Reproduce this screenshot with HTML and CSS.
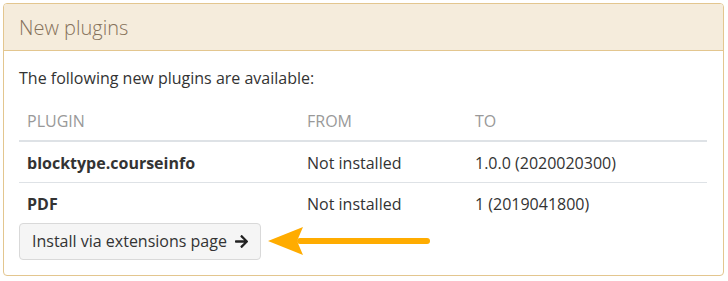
FILE: index.html
```html
<!DOCTYPE html>
<html lang="en">
  <head>
    <meta charset="UTF-8" />
    <title>New plugins</title>
    <link rel="stylesheet" href="styles.css">
  </head>
  <body>
    <div class="card">
      <div class="card-header">New plugins</div>
      <div class="card-body">
        <p>The following new plugins are available:</p>
        <table class="plugins">
          <thead>
            <tr>
              <th class="col-name">Plugin</th>
              <th class="col-from">From</th>
              <th class="col-to">To</th>
            </tr>
          </thead>
          <tbody>
            <tr>
              <td class="name">blocktype.courseinfo</td>
              <td>Not installed</td>
              <td>1.0.0 (2020020300)</td>
            </tr>
            <tr>
              <td class="name">PDF</td>
              <td>Not installed</td>
              <td>1 (2019041800)</td>
            </tr>
          </tbody>
        </table>
        <div class="actions">
          <button class="btn">
            Install via extensions page
            <svg class="icon" viewBox="0 0 448 512" width="14" height="15"><path d="M190.5 66.9l22.2-22.2c9.4-9.4 24.6-9.4 33.9 0L441 239c9.4 9.4 9.4 24.6 0 33.9L246.6 467.3c-9.4 9.4-24.6 9.4-33.9 0l-22.2-22.2c-9.5-9.5-9.3-25 .4-34.3L311.4 296H24c-13.3 0-24-10.7-24-24v-32c0-13.3 10.7-24 24-24h287.4L190.9 101.2c-9.8-9.3-10-24.8-.4-34.3z" fill="currentColor"/></svg>
          </button>
          <svg class="pointer" viewBox="0 0 170 32" width="170" height="32">
            <line x1="34" y1="17" x2="161" y2="17" stroke="#ffac00" stroke-width="6" stroke-linecap="round"/>
            <polygon points="2,17 37,3 31,17 37,31" fill="#ffac00"/>
          </svg>
        </div>
      </div>
    </div>
  </body>
</html>
```

FILE: styles.css
```css
* {
  margin: 0;
  padding: 0;
  box-sizing: border-box;
}
body {
  font-family: "Open Sans", sans-serif;
  font-size: 16px;
  line-height: 20px;
  color: #333;
  background-color: #fff;
  padding: 3px;
}
.card {
  width: 721px;
  border: 1px solid #e3c68f;
  border-radius: 4px;
  background-color: #fff;
}
.card-header {
  background-color: #f5ecdc;
  border-bottom: 1px solid #e3c68f;
  border-radius: 3px 3px 0 0;
  padding: 12px 15px 11px;
  font-size: 20px;
  font-weight: 300;
  line-height: 23px;
  color: #85715a;
}
.card-body {
  padding: 17px 15px 15px;
}
.card-body p {
  margin-bottom: 15px;
}
.plugins {
  width: 688px;
  border-collapse: collapse;
}
.plugins th,
.plugins td {
  text-align: left;
  padding: 11px 8px 9px;
  vertical-align: middle;
}
.plugins th {
  font-weight: 400;
  text-transform: uppercase;
  color: #999;
  padding: 8px 8px 9px;
  border-bottom: 2px solid #dee2e6;
}
.plugins tbody tr + tr td {
  border-top: 1px solid #dee2e6;
}
.col-name {
  width: 280px;
}
.col-from {
  width: 168px;
}
.plugins td.name {
  font-weight: 700;
}
.actions {
  position: relative;
}
.btn {
  font-family: "Open Sans", sans-serif;
  font-size: 16px;
  line-height: 20px;
  color: #333;
  background-color: #f5f5f5;
  border: 1px solid #d9d9d9;
  border-radius: 4px;
  padding: 7px 12px 8px 12px;
  display: inline-flex;
  align-items: center;
  gap: 8px;
  white-space: nowrap;
  width: 242px;
  height: 37px;
}
.icon {
  color: #222;
}
.pointer {
  position: absolute;
  left: 247px;
  top: 1px;
}
```
